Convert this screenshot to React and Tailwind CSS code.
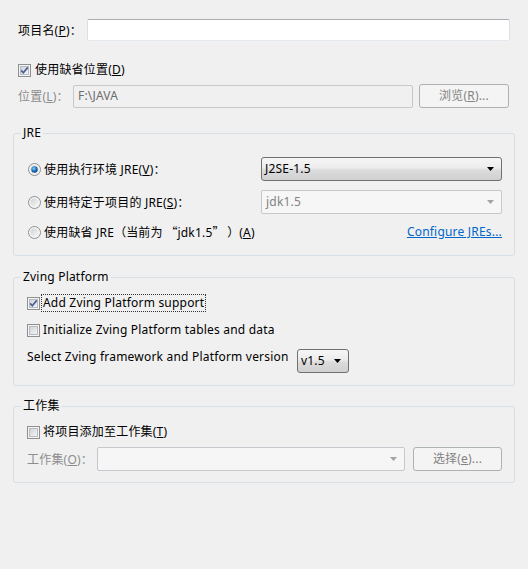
import React from 'react';

const font = "font-['Noto_Sans','Noto_Sans_CJK_SC',sans-serif]";

// full-width punctuation needs the CJK face, Noto Sans draws it narrow
function P({ children }) {
  return <span className="font-['Noto_Sans_CJK_SC',sans-serif] tracking-normal">{children}</span>;
}

function CheckBox({ checked }) {
  return (
    <svg width="13" height="13" viewBox="0 0 13 13" className="flex-none">
      <defs>
        <linearGradient id="cbfill" x1="0" y1="0" x2="1" y2="1">
          <stop offset="0" stopColor="#cdd1d6" />
          <stop offset="1" stopColor="#f6f6f6" />
        </linearGradient>
      </defs>
      <rect x="0.5" y="0.5" width="12" height="12" fill="#f4f4f4" stroke="#8e8f8f" />
      <rect x="2.5" y="2.5" width="8" height="8" fill="url(#cbfill)" stroke="#b8bcc2" />
      {checked && <path d="M3.2 6.4 L5.3 8.8 L9.8 3.4" fill="none" stroke="#4a5e97" strokeWidth="1.7" />}
    </svg>
  );
}

function Radio({ checked }) {
  return (
    <svg width="13" height="13" viewBox="0 0 13 13" className="flex-none">
      <defs>
        <radialGradient id="rdot" cx="0.4" cy="0.35" r="0.7">
          <stop offset="0" stopColor="#8fd0f5" />
          <stop offset="0.6" stopColor="#1a6bb8" />
          <stop offset="1" stopColor="#0c3f7a" />
        </radialGradient>
        <linearGradient id="rin" x1="0" y1="0" x2="1" y2="1">
          <stop offset="0" stopColor="#cfd2d6" />
          <stop offset="1" stopColor="#f7f7f7" />
        </linearGradient>
      </defs>
      <circle cx="6.5" cy="6.5" r="6" fill="#f4f4f4" stroke="#8e8f8f" />
      <circle cx="6.5" cy="6.5" r="4" fill="url(#rin)" />
      {checked && <circle cx="6.5" cy="6.5" r="3.2" fill="url(#rdot)" />}
    </svg>
  );
}

function Arrow({ disabled }) {
  return (
    <svg width="7" height="4" viewBox="0 0 7 4" className="flex-none">
      <path d="M0 0 H7 L3.5 4 Z" fill={disabled ? '#a3a3a3' : '#000'} />
    </svg>
  );
}

function Combo({ value, disabled, className = '' }) {
  if (disabled) {
    return (
      <div className={`h-[24px] flex items-center justify-between rounded-[2px] border border-[#c5c8cc] bg-[#f6f6f6] pl-[4px] pr-[7px] text-[#838383] ${className}`}>
        <span>{value}</span>
        <Arrow disabled />
      </div>
    );
  }
  return (
    <div className={`h-[24px] flex items-center justify-between rounded-[3px] border border-[#707070] bg-[linear-gradient(#f6f6f6,#ececec_45%,#dcdcdc_55%,#d0d0d0)] pl-[3px] pr-[7px] text-black ${className}`}>
      <span>{value}</span>
      <Arrow />
    </div>
  );
}

function Button({ children }) {
  return (
    <div className="h-[24px] flex items-center justify-center rounded-[3px] border border-[#adb2b5] bg-[#f4f4f4] text-[#838383]">
      {children}
    </div>
  );
}

function Group({ title, className = '', children }) {
  return (
    <fieldset className={`mx-[13px] rounded-[3px] border border-[#d5dfe5] p-0 ${className}`}>
      <legend className="ml-[7px] px-[2px] leading-[16px] text-black">{title}</legend>
      {children}
    </fieldset>
  );
}

export default function App() {
  return (
    <div className={`w-[528px] h-[569px] bg-[#f0f0f0] text-[12px] leading-[16px] tracking-[0.2px] text-black ${font}`}>
      {/* project name */}
      <div className="flex items-center pl-[18px] pr-[18px] pt-[19px]">
        <span className="w-[69px] flex-none">项目名(<u>P</u>)<P>：</P></span>
        <div className="h-[22px] flex-1 rounded-[2px] border border-[#abadb3] border-b-[#e3e9ef] border-x-[#dbdfe6] bg-white" />
      </div>

      <div className="mt-[21px] flex items-center gap-[4px] pl-[18px]">
        <CheckBox checked />
        <span>使用缺省位置(<u>D</u>)</span>
      </div>

      <div className="mt-[6px] flex items-center pl-[18px] pr-[19px]">
        <span className="w-[55px] flex-none text-[#8d8d8d]">位置(<u>L</u>)<P>：</P></span>
        <div className="h-[23px] flex-1 flex items-center rounded-[2px] border border-[#c5c8cc] bg-[#f0f0f0] pl-[4px] text-[#6d6d6d]">F:\JAVA</div>
        <div className="ml-[6px] w-[90px]">
          <Button>浏览(<u>R</u>)...</Button>
        </div>
      </div>

      {/* JRE */}
      <Group title="JRE" className="mt-[17px]">
        <div className="pl-[14px] pr-[12px] pt-[16px] pb-[11px]">
          <div className="grid grid-cols-[233px_1fr] items-center">
            <div className="flex items-center gap-[3px]">
              <Radio checked />
              <span>使用执行环境 JRE(<u>V</u>)<P>：</P></span>
            </div>
            <Combo value="J2SE-1.5" />
          </div>
          <div className="mt-[9px] grid grid-cols-[233px_1fr] items-center">
            <div className="flex items-center gap-[3px]">
              <Radio />
              <span>使用特定于项目的 JRE(<u>S</u>)<P>：</P></span>
            </div>
            <Combo value="jdk1.5" disabled />
          </div>
          <div className="mt-[6px] h-[24px] flex items-center justify-between">
            <div className="flex items-center gap-[3px]">
              <Radio />
              <span>使用缺省 JRE<P>（</P>当前为<P> “</P>jdk1.5<P>” ）</P>(<u>A</u>)</span>
            </div>
            <span className="text-[#0066cc] underline">Configure JREs...</span>
          </div>
        </div>
      </Group>

      {/* Zving Platform */}
      <Group title="Zving Platform" className="mt-[13px]">
        <div className="pl-[13px] pr-[12px] pt-[10px] pb-[12px]">
          <div className="flex items-center gap-[2px]">
            <CheckBox checked />
            <span className="outline-1 outline-dotted outline-[#333] px-[1px]">Add Zving Platform support</span>
          </div>
          <div className="mt-[11px] flex items-center gap-[2px]">
            <CheckBox />
            <span className="px-[1px]">Initialize Zving Platform tables and data</span>
          </div>
          <div className="mt-[11px] flex items-start">
            <span className="w-[270px] flex-none">Select Zving framework and Platform version</span>
            <Combo value="v1.5" className="w-[52px]" />
          </div>
        </div>
      </Group>

      {/* working set */}
      <Group title="工作集" className="mt-[12px]">
        <div className="pl-[13px] pr-[12px] pt-[10px] pb-[11px]">
          <div className="flex items-center gap-[3px]">
            <CheckBox />
            <span>将项目添加至工作集(<u>T</u>)</span>
          </div>
          <div className="mt-[7px] flex items-center">
            <span className="w-[70px] flex-none text-[#8d8d8d]">工作集(<u>O</u>)<P>：</P></span>
            <Combo value="" disabled className="flex-1" />
            <div className="ml-[8px] w-[89px]">
              <Button>选择(<u>e</u>)...</Button>
            </div>
          </div>
        </div>
      </Group>
    </div>
  );
}
